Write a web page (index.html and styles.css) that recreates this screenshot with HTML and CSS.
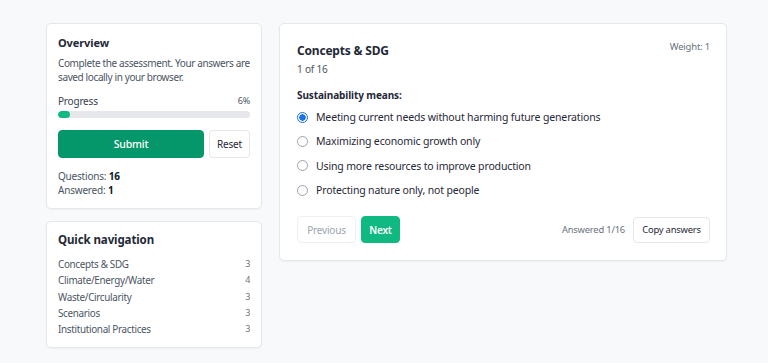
FILE: index.html
```html
<!DOCTYPE html>
<html lang="en">
<head>
<meta charset="utf-8">
<title>Assessment</title>
<link rel="stylesheet" href="styles.css">
</head>
<body>
<main class="layout">
  <aside class="sidebar">
    <section class="card overview">
      <h2 class="card-title">Overview</h2>
      <p class="muted-text">Complete the assessment. Your answers are saved locally in your browser.</p>
      <div class="progress-row"><span>Progress</span><span class="pct">6%</span></div>
      <div class="progress-track"><div class="progress-fill" style="width:6%"></div></div>
      <div class="action-row">
        <button class="btn btn-submit">Submit</button>
        <button class="btn btn-outline">Reset</button>
      </div>
      <div class="stats">
        <div>Questions: <b>16</b></div>
        <div>Answered: <b>1</b></div>
      </div>
    </section>
    <section class="card quicknav">
      <h2 class="card-title nav-title">Quick navigation</h2>
      <ul class="nav-list">
        <li><span>Concepts &amp; SDG</span><span class="count">3</span></li>
        <li><span>Climate/Energy/Water</span><span class="count">4</span></li>
        <li><span>Waste/Circularity</span><span class="count">3</span></li>
        <li><span>Scenarios</span><span class="count">3</span></li>
        <li><span>Institutional Practices</span><span class="count">3</span></li>
      </ul>
    </section>
  </aside>
  <section class="card question">
    <header class="q-head">
      <div>
        <h1 class="q-title">Concepts &amp; SDG</h1>
        <div class="q-index">1 of 16</div>
      </div>
      <div class="weight">Weight: 1</div>
    </header>
    <div class="q-text">Sustainability means:</div>
    <ul class="options">
      <li class="option selected"><span class="radio"></span>Meeting current needs without harming future generations</li>
      <li class="option"><span class="radio"></span>Maximizing economic growth only</li>
      <li class="option"><span class="radio"></span>Using more resources to improve production</li>
      <li class="option"><span class="radio"></span>Protecting nature only, not people</li>
    </ul>
    <footer class="q-foot">
      <div class="nav-btns">
        <button class="btn btn-disabled">Previous</button>
        <button class="btn btn-next">Next</button>
      </div>
      <div class="foot-right">
        <span class="answered">Answered 1/16</span>
        <button class="btn btn-outline btn-copy">Copy answers</button>
      </div>
    </footer>
  </section>
</main>
</body>
</html>
```
FILE: styles.css
```css
* { box-sizing: border-box; }
html, body { margin: 0; padding: 0; }
body {
  background: #f8f9fa;
  font-family: "Noto Sans", "Open Sans", sans-serif;
  font-size: 10px;
  letter-spacing: -0.2px;
  color: #374151;
  width: 768px;
  height: 363px;
  overflow: hidden;
}
.layout {
  display: grid;
  grid-template-columns: 216px 448px;
  column-gap: 17px;
  padding: 23px 0 0 46px;
  align-items: start;
}
.sidebar { display: flex; flex-direction: column; gap: 12px; }
.card {
  background: #fff;
  border: 1px solid #e5e7eb;
  border-radius: 5px;
  box-shadow: 0 1px 2px rgba(0,0,0,0.04);
}
.overview { padding: 12px 11px 11px; }
.card-title {
  margin: 0;
  font-size: 11px;
  line-height: 14px;
  font-weight: 700;
  color: #1f2937;
  letter-spacing: -0.1px;
}
.muted-text {
  margin: 6px 0 0;
  line-height: 14px;
  color: #4b5563;
  letter-spacing: -0.38px;
}
.progress-row {
  margin-top: 10px;
  display: flex;
  justify-content: space-between;
  line-height: 14px;
  color: #374151;
}
.pct { font-size: 9px; color: #4b5563; }
.progress-track {
  margin-top: 3px;
  height: 7px;
  background: #e5e7eb;
  border-radius: 4px;
  overflow: hidden;
}
.progress-fill { height: 100%; background: #10b981; border-radius: 4px; }
.action-row { margin-top: 12px; display: flex; gap: 5px; }
.btn {
  font-family: inherit;
  font-size: 10px;
  letter-spacing: -0.2px;
  border-radius: 4px;
  border: 1px solid #e5e7eb;
  background: #fff;
  color: #1f2937;
  padding: 0 9px;
  cursor: pointer;
}
.btn-submit {
  flex: 1;
  height: 28px;
  background: #059669;
  border-color: #059669;
  color: #fff;
  font-size: 10.5px;
  font-weight: 500;
}
.action-row .btn-outline { height: 28px; width: 41px; padding: 0; }
.stats { margin-top: 11px; line-height: 14px; color: #4b5563; }
.stats b { color: #111827; }
.quicknav { padding: 11px 11px 10px; }
.nav-title { font-size: 11.5px; }
.nav-list { list-style: none; margin: 9px 0 0; padding: 0; }
.nav-list li {
  display: flex;
  justify-content: space-between;
  line-height: 16.3px;
  font-size: 9.9px;
  letter-spacing: -0.32px;
  color: #4b5563;
}
.count { font-size: 9px; color: #6b7280; }
.question { padding: 18px 16px 17px 17px; }
.q-head { display: flex; justify-content: space-between; align-items: flex-start; }
.q-title {
  margin: 0;
  font-size: 12px;
  line-height: 18px;
  font-weight: 700;
  color: #1f2937;
}
.q-index { margin-top: 2px; line-height: 14px; color: #4b5563; }
.weight { font-size: 9.5px; color: #6b7280; line-height: 14px; margin-top: -2px; }
.q-text {
  margin-top: 12px;
  font-weight: 700;
  line-height: 14px;
  color: #1f2937;
  letter-spacing: -0.1px;
}
.options { list-style: none; margin: 3px 0 0; padding: 0; }
.option {
  display: flex;
  align-items: center;
  height: 24.3px;
  gap: 8px;
  color: #1f2937;
  font-size: 10.5px;
  letter-spacing: -0.15px;
}
.radio {
  width: 11px;
  height: 11px;
  border: 1px solid #9ca3af;
  border-radius: 50%;
  background: #fff;
  flex: none;
}
.option.selected .radio {
  border-color: #1a73e8;
  background: radial-gradient(circle, #1a73e8 0 3px, #fff 3.4px);
}
.q-foot {
  margin-top: 14px;
  display: flex;
  justify-content: space-between;
  align-items: center;
}
.nav-btns { display: flex; gap: 5px; }
.nav-btns .btn { height: 27px; }
.btn-disabled { color: #9ca3af; border-color: #eef0f3; width: 59px; padding: 0; }
.btn-next {
  width: 39px;
  padding: 0;
  background: #10b981;
  border-color: #10b981;
  color: #fff;
  font-weight: 600;
}
.foot-right { display: flex; align-items: center; gap: 8px; }
.answered { color: #6b7280; font-size: 9.4px; }
.btn-copy { height: 26px; width: 77px; padding: 0; font-size: 9.4px; }
```
